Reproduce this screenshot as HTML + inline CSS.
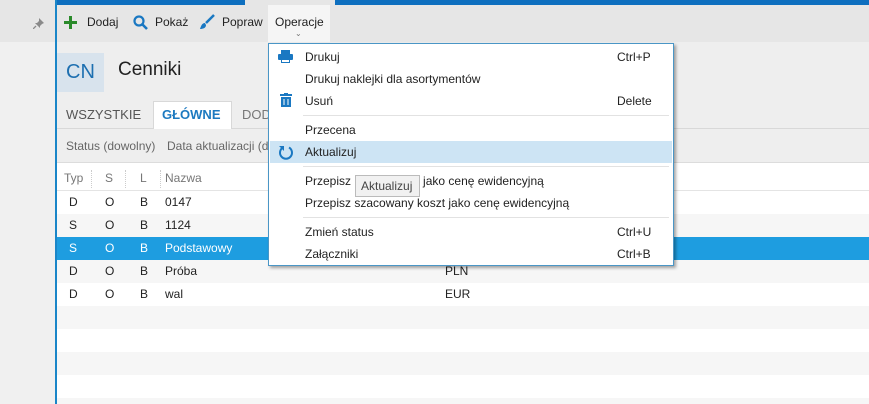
<!DOCTYPE html>
<html><head><meta charset="utf-8"><style>
*{margin:0;padding:0;box-sizing:border-box}
html,body{width:869px;height:404px;overflow:hidden}
body{position:relative;background:#fff;font-family:"Segoe UI","Liberation Sans","DejaVu Sans",sans-serif;font-size:12px;color:#222}
.abs{position:absolute}
.left{left:0;top:0;width:55px;height:404px;background:#f0f0f0}
.vline{left:55px;top:0;width:2px;height:404px;background:#1a86c8}
.tb{left:0;top:0;width:869px;height:42px;background:#e6e6e6}
.blue{top:0;height:5px;background:#0e6fbf}
.hdr{left:57px;top:42px;width:812px;height:58px;background:#eeeeee}
.tabs{left:57px;top:100px;width:812px;height:29px;background:#eeeeee;border-bottom:1px solid #d8d8d8}
.filt{left:57px;top:129px;width:812px;height:34px;background:#eeeeee;border-bottom:1px solid #dcdcdc}
.row{left:57px;width:812px;height:23px;line-height:22px}
.row span{position:absolute}
.g{background:#f6f6f6}
.menu{left:268px;top:43px;width:406px;height:223px;background:#fff;border:1px solid #4a96c6;box-shadow:2px 2px 3px rgba(0,0,0,.35)}
.mi{position:absolute;left:0;width:404px;height:22px;line-height:22px;padding-left:36px;font-size:12px;white-space:nowrap}
.mi .k{position:absolute;left:348px}
.sep{position:absolute;left:34px;width:366px;height:1px;background:#e2e2e2}
</style></head><body>
<div class="abs left"></div>
<div class="abs tb"></div>
<svg class="abs" style="left:33px;top:18px" width="11" height="11"><path d="M6 0l5 5-2 1-2 2 0 2-5-5 2 0 2-2z" fill="#8a8a8a"/><path d="M3 8l-3 3" stroke="#8a8a8a" stroke-width="1.3"/></svg>
<div class="abs blue" style="left:55px;width:190px"></div>
<div class="abs blue" style="left:335px;width:534px"></div>
<div class="abs vline"></div>
<div class="abs" style="left:268px;top:5px;width:62px;height:37px;background:#f5f5f5"></div>
<svg class="abs" style="left:64px;top:16px" width="13" height="13"><path d="M6.5 0v13M0 6.5h13" stroke="#2a8a2a" stroke-width="3"/></svg>
<div class="abs" style="left:87px;top:15px">Dodaj</div>
<svg class="abs" style="left:133px;top:15px" width="15" height="15"><circle cx="6" cy="6" r="4.5" fill="none" stroke="#1a78c2" stroke-width="2.2"/><path d="M9 9l5 5" stroke="#1a78c2" stroke-width="2.6"/></svg>
<div class="abs" style="left:155px;top:15px">Pokaż</div>
<svg class="abs" style="left:199px;top:14px" width="16" height="16"><path d="M15 1L7 9" stroke="#1a78c2" stroke-width="2.5"/><path d="M6 9c-3 0-4 3-5 6 3 0 6-1 6-4z" fill="#1a78c2"/></svg>
<div class="abs" style="left:222px;top:15px">Popraw</div>
<div class="abs" style="left:275px;top:15px">Operacje</div>
<div class="abs" style="left:295px;top:29px;color:#777;font-size:8px">&#8964;</div>
<div class="abs hdr"></div>
<div class="abs" style="left:57px;top:53px;width:47px;height:39px;background:#d8e3ed;color:#1d6fb0;font-size:20px;line-height:39px;text-align:center">CN</div>
<div class="abs" style="left:118px;top:59px;font-size:19px;color:#222">Cenniki</div>
<div class="abs tabs"></div>
<div class="abs" style="left:66px;top:107px;font-size:13px;color:#555">WSZYSTKIE</div>
<div class="abs" style="left:153px;top:101px;width:79px;height:29px;background:#fff;border:1px solid #d8d8d8;border-bottom:none"></div>
<div class="abs" style="left:162px;top:107px;font-size:13px;color:#1d7ac0;font-weight:bold">GŁÓWNE</div>
<div class="abs" style="left:242px;top:107px;font-size:13px;color:#777">DOD</div>
<div class="abs filt"></div>
<div class="abs" style="left:66px;top:139px;color:#666">Status (dowolny)</div>
<div class="abs" style="left:167px;top:139px;color:#666">Data aktualizacji (d</div>
<div class="abs row" style="top:167px;color:#777;height:24px;border-bottom:1px solid #e4e4e4"><span style="left:7px">Typ</span><span style="left:48px">S</span><span style="left:83px">L</span><span style="left:108px">Nazwa</span></div>
<div class="abs" style="left:91px;top:170px;height:18px;border-left:1px dotted #ccc"></div>
<div class="abs" style="left:125px;top:170px;height:18px;border-left:1px dotted #ccc"></div>
<div class="abs" style="left:160px;top:170px;height:18px;border-left:1px dotted #ccc"></div>
<div class="abs row" style="top:191px"><span style="left:12px">D</span><span style="left:48px">O</span><span style="left:83px">B</span><span style="left:108px">0147</span></div>
<div class="abs row g" style="top:214px"><span style="left:12px">S</span><span style="left:48px">O</span><span style="left:83px">B</span><span style="left:108px">1124</span></div>
<div class="abs row" style="top:237px;background:#1e9de0;color:#fff"><span style="left:12px">S</span><span style="left:48px">O</span><span style="left:83px">B</span><span style="left:108px">Podstawowy</span></div>
<div class="abs row g" style="top:260px"><span style="left:12px">D</span><span style="left:48px">O</span><span style="left:83px">B</span><span style="left:108px">Próba</span><span style="left:388px">PLN</span></div>
<div class="abs row" style="top:283px"><span style="left:12px">D</span><span style="left:48px">O</span><span style="left:83px">B</span><span style="left:108px">wal</span><span style="left:388px">EUR</span></div>
<div class="abs row g" style="top:306px"></div>
<div class="abs row g" style="top:352px"></div>
<div class="abs row g" style="top:398px;height:6px"></div>
<div class="abs menu">
<svg style="position:absolute;left:9px;top:6px" width="15" height="13"><rect x="3" y="0" width="9" height="4" fill="#1a78c2"/><rect x="0" y="4" width="15" height="6" rx="1" fill="#1a78c2"/><rect x="3" y="9" width="9" height="4" fill="#1a78c2"/><rect x="4" y="10" width="7" height="2" fill="#fff"/></svg>
<div class="mi" style="top:2px">Drukuj<span class="k">Ctrl+P</span></div>
<div class="mi" style="top:24px">Drukuj naklejki dla asortymentów</div>
<svg style="position:absolute;left:11px;top:49px" width="12" height="14"><rect x="0" y="1" width="12" height="2" fill="#1a78c2"/><rect x="4" y="0" width="4" height="2" fill="#1a78c2"/><rect x="1" y="4" width="10" height="10" fill="#1a78c2"/><path d="M4 6v6M8 6v6" stroke="#fff" stroke-width="1"/></svg>
<div class="mi" style="top:46px">Usuń<span class="k">Delete</span></div>
<div class="sep" style="top:71px"></div>
<div class="mi" style="top:75px">Przecena</div>
<div class="mi" style="top:97px;background:#cde4f4;left:1px;width:402px;padding-left:35px">Aktualizuj</div>
<svg style="position:absolute;left:9px;top:100px" width="16" height="16"><path d="M5 3.5A6 6 0 1 0 11 3.5" fill="none" stroke="#1a78c2" stroke-width="2"/><path d="M1 2h5v5z" fill="#1a78c2"/></svg>
<div class="sep" style="top:122px"></div>
<div class="mi" style="top:126px">Przepisz po kalkulacji jako cenę ewidencyjną</div>
<div class="mi" style="top:148px">Przepisz szacowany koszt jako cenę ewidencyjną</div>
<div class="sep" style="top:173px"></div>
<div class="mi" style="top:177px">Zmień status<span class="k">Ctrl+U</span></div>
<div class="mi" style="top:199px">Załączniki<span class="k">Ctrl+B</span></div>
<div style="position:absolute;left:86px;top:131px;width:65px;height:22px;background:#f1f1f1;border:1px solid #bbb;font-size:12px;line-height:20px;padding-left:5px;color:#444">Aktualizuj</div>
</div>
</body></html>
